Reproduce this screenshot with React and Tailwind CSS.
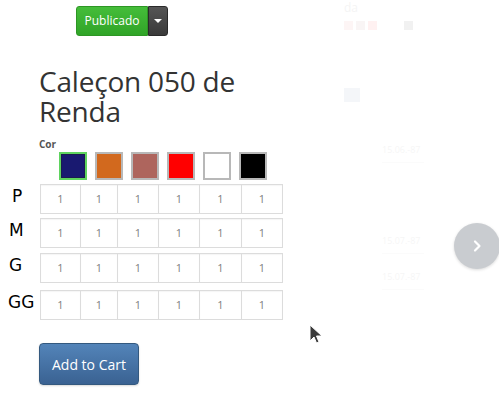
import React from 'react';

const swatches = [
  { color: 'bg-[#191970]', border: 'border-[#5fd35f]', active: true },
  { color: 'bg-[#d2691e]', border: 'border-[#b8b8b8]' },
  { color: 'bg-[#ae655d]', border: 'border-[#b8b8b8]' },
  { color: 'bg-[#ff0000]', border: 'border-[#b8b8b8]' },
  { color: 'bg-white', border: 'border-[#b8b8b8]' },
  { color: 'bg-black', border: 'border-[#b8b8b8]' },
];

const cellWidths = ['w-[41px]', 'w-[37px]', 'w-[41px]', 'w-[41px]', 'w-[42px]', 'w-[41px]'];

const sizes = [
  { label: 'P', pad: 'pl-[12px]', gap: 'mt-0' },
  { label: 'M', pad: 'pl-[9px]', gap: 'mt-[4px]' },
  { label: 'G', pad: 'pl-[9px]', gap: 'mt-[5px]' },
  { label: 'GG', pad: 'pl-[8px]', gap: 'mt-[7px]' },
];

function SizeRow({ label, pad, gap }) {
  return (
    <div className={`flex items-center ${gap}`}>
      <div className={`w-[40px] shrink-0 ${pad} text-[17px] leading-none text-black pb-[6px]`} style={{ fontFamily: '"DejaVu Sans", sans-serif' }}>
        {label}
      </div>
      <div className="flex h-[30px]">
        {cellWidths.map((w, i) => (
          <div
            key={i}
            className={`${w} h-full flex items-center justify-center border-y border-r border-[#dcdcdc] first:border-l bg-white text-[11px] text-[#808080] shadow-[inset_0_1px_1px_rgba(0,0,0,0.04)]`}
          >
            1
          </div>
        ))}
      </div>
    </div>
  );
}

function GhostDate({ children, gap }) {
  return (
    <div className={`${gap} ml-[38px] w-[42px] pb-[6px] border-b border-[#bbb] text-[9px] leading-[12px] text-[#555]`}>
      {children}
    </div>
  );
}

export default function App() {
  return (
    <div className="relative w-[499px] h-[401px] overflow-hidden bg-white flex" style={{ fontFamily: '"Open Sans", "Noto Sans", sans-serif' }}>
      {/* product column */}
      <div className="w-[342px] shrink-0 flex flex-col">
        <div className="flex ml-[76px] mt-[6px] h-[30px]">
          <div className="w-[72px] flex items-center justify-center rounded-l-[3px] bg-gradient-to-b from-[#45bd3a] to-[#30a427] border border-[#2d9624] text-white text-[12px]">
            Publicado
          </div>
          <div className="w-[20px] flex items-center justify-center rounded-r-[3px] bg-gradient-to-b from-[#555] to-[#3a3a3a] border border-[#2a2a2a]">
            <span className="block w-0 h-0 border-l-[4px] border-r-[4px] border-t-[4px] border-l-transparent border-r-transparent border-t-white" />
          </div>
        </div>

        <h1 className="ml-[39px] mt-[30px] text-[28px] leading-[30px] text-[#333] font-normal tracking-[-0.2px]">
          Caleçon 050 de
          <br />
          Renda
        </h1>

        <div className="ml-[39px] mt-[12px] text-[10px] font-bold leading-[12px] text-[#555]">Cor</div>

        <div className="flex gap-[8px] ml-[59px] mt-[2px]">
          {swatches.map((s, i) => (
            <div key={i} className={`w-[28px] h-[28px] border-2 ${s.border}`}>
              <div className={`w-full h-full ${s.color} ${s.active ? 'border border-[#1a1a50]' : ''}`} />
            </div>
          ))}
        </div>

        <div className="mt-[4px] flex flex-col">
          {sizes.map((s) => (
            <SizeRow key={s.label} {...s} />
          ))}
        </div>

        <button className="ml-[39px] mt-[23px] w-[100px] h-[42px] rounded-[4px] bg-gradient-to-b from-[#5384b9] to-[#3a6292] border border-[#34597f] text-white text-[14px] shadow-[0_1px_2px_rgba(0,0,0,0.15)]">
          Add to Cart
        </button>
      </div>

      {/* faded side panel */}
      <div className="flex-1 flex flex-col pl-[2px] pt-[1px] opacity-[0.05]">
        <div className="text-[12px] leading-[14px] text-[#333]">da</div>
        <div className="flex gap-[3px] mt-[6px]">
          <div className="w-[9px] h-[9px] bg-[#e05050]" />
          <div className="w-[9px] h-[9px] bg-[#a05050]" />
          <div className="w-[9px] h-[9px] bg-[#ff0000]" />
          <div className="w-[9px] h-[9px] bg-white ml-[12px]" />
          <div className="w-[9px] h-[9px] bg-black" />
        </div>
        <div className="mt-[58px] w-[16px] h-[14px] bg-[#3a6292]" />
        <GhostDate gap="mt-[42px]">15.06.-87</GhostDate>
        <GhostDate gap="mt-[72px]">15.07.-87</GhostDate>
        <GhostDate gap="mt-[17px]">15.07.-87</GhostDate>
      </div>

      {/* carousel next */}
      <div className="absolute left-[454px] top-[223px] w-[46px] h-[46px] rounded-full bg-[#c9ccd0] shadow-[0_1px_3px_rgba(0,0,0,0.15)] flex items-center justify-center">
        <svg width="14" height="14" viewBox="0 0 14 14" fill="none">
          <path d="M5 2.5 L9.5 7 L5 11.5" stroke="white" strokeWidth="2.2" strokeLinecap="round" strokeLinejoin="round" />
        </svg>
      </div>

      {/* mouse cursor */}
      <svg className="absolute left-[309px] top-[324px]" width="14" height="22" viewBox="0 0 14 22">
        <path d="M1 1 L1 17 L5 13 L7.5 19 L10 18 L7.5 12 L13 12 Z" fill="#3a3a3a" stroke="white" strokeWidth="1" />
      </svg>
    </div>
  );
}
